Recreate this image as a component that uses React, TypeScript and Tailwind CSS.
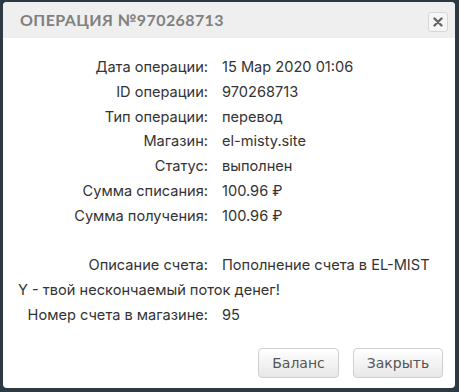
import React from 'react';

const rows = [
  { label: 'Дата операции:', value: '15 Мар 2020 01:06' },
  { label: 'ID операции:', value: '970268713' },
  { label: 'Тип операции:', value: 'перевод' },
  { label: 'Магазин:', value: 'el-misty.site' },
  { label: 'Статус:', value: 'выполнен' },
  { label: 'Сумма списания:', value: '100.96 ₽' },
  { label: 'Сумма получения:', value: '100.96 ₽' },
];

const Label: React.FC<{ children: React.ReactNode }> = ({ children }) => (
  <span className="inline-block w-[190px] text-right pr-[14px] box-content break-normal">{children}</span>
);

export default function App() {
  return (
    <div className="w-[459px] h-[392px] bg-[#2c3b43] pl-[3px] pt-[2px] pr-[4px] pb-[4px]">
      <div className="h-full bg-white rounded-[4px] flex flex-col overflow-hidden">
        <div className="h-[36px] bg-[#efefef] flex items-center justify-between pl-[17px] pr-[7px]">
          <h3
            className="text-[16px] font-bold tracking-[0.4px] text-[#808080]"
            style={{ fontFamily: 'Lato, "Noto Sans", sans-serif' }}
          >
            ОПЕРАЦИЯ №970268713
          </h3>
          <button className="w-[20px] h-[20px] mt-[4px] rounded-[3px] border border-[#d6d6d6] bg-[#f6f6f6] flex items-center justify-center">
            <svg width="10" height="10" viewBox="0 0 10 10">
              <path d="M1.5 1.5 L8.5 8.5 M8.5 1.5 L1.5 8.5" stroke="#666" strokeWidth="2.4" strokeLinecap="round" />
            </svg>
          </button>
        </div>
        <div
          className="pl-[15px] pr-[18px] pt-[17px] text-[14.6px] leading-[24.8px] text-[#333]"
          style={{ fontFamily: 'Inter, "Noto Sans", sans-serif' }}
        >
          {rows.map((r) => (
            <div key={r.label}>
              <Label>{r.label}</Label>
              {r.value}
            </div>
          ))}
          <div>&nbsp;</div>
          <div className="break-all">
            <Label>Описание счета:</Label>
            Пополнение счета в EL-MISTY - твой нескончаемый поток денег!
          </div>
          <div>
            <Label>Номер счета в магазине:</Label>
            95
          </div>
        </div>
        <div
          className="mt-auto flex justify-end gap-[14px] pr-[12px] pb-[10px]"
          style={{ fontFamily: '"DejaVu Sans", Verdana, sans-serif' }}
        >
          <button className="w-[81px] h-[30px] rounded-[4px] border border-[#cfcfcf] bg-gradient-to-b from-white to-[#e8e8e8] text-[14px] text-[#555]">
            Баланс
          </button>
          <button className="w-[90px] h-[30px] rounded-[4px] border border-[#cfcfcf] bg-gradient-to-b from-white to-[#e8e8e8] text-[14px] text-[#555]">
            Закрыть
          </button>
        </div>
      </div>
    </div>
  );
}
